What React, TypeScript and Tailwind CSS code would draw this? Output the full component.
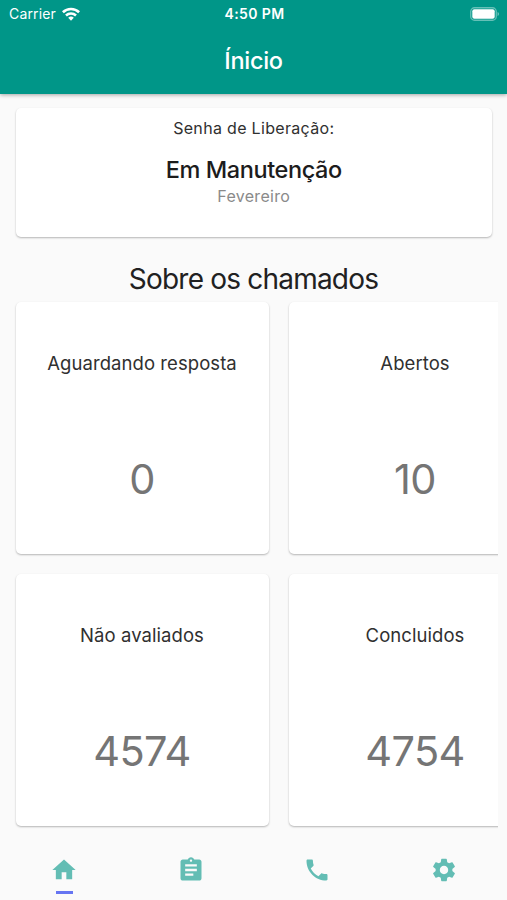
import { MdAssignment, MdHome, MdPhone, MdSettings } from "react-icons/md";

interface TicketCardProps {
  title: string;
  value: string;
}

const tickets: TicketCardProps[] = [
  { title: "Aguardando resposta", value: "0" },
  { title: "Abertos", value: "10" },
  { title: "Não avaliados", value: "4574" },
  { title: "Concluidos", value: "4754" },
];

const tabs = [
  { name: "home", Icon: MdHome },
  { name: "tickets", Icon: MdAssignment },
  { name: "phone", Icon: MdPhone },
  { name: "settings", Icon: MdSettings },
];

function TicketCard({ title, value }: TicketCardProps) {
  return (
    <div className="flex h-[252px] flex-col items-center rounded-[5px] bg-white pt-[47px] shadow-[0_1px_2px_rgba(0,0,0,0.28)]">
      <h3 className="text-[18.5px] leading-7 tracking-[0.07px] text-[#303030]">{title}</h3>
      <p className="mt-[77px] text-[41.5px] leading-[50px] tracking-[-0.6px] text-[#757575]">
        {value}
      </p>
    </div>
  );
}

function WifiIcon() {
  return (
    <svg viewBox="0 0 18 14" className="h-3.5 w-[18px]" fill="none" stroke="currentColor" strokeWidth="2.6">
      <path d="M.9 5.2a11.7 11.7 0 0 1 16.2 0" />
      <path d="M4 8.5a7.3 7.3 0 0 1 10 0" />
      <path d="M6.2 10.8a4 4 0 0 1 5.6 0L9 13.8z" fill="currentColor" stroke="none" />
    </svg>
  );
}

function BatteryIcon() {
  return (
    <svg viewBox="0 0 30 14" className="h-3.5 w-[30px]">
      <rect x=".75" y=".75" width="25.5" height="12.5" rx="3.8" fill="none" stroke="white" strokeOpacity=".4" strokeWidth="1.3" />
      <rect x="2.3" y="2.3" width="22.4" height="9.4" rx="2" fill="white" />
      <path d="M27.6 5a2.2 2.2 0 0 1 0 4z" fill="white" fillOpacity=".5" />
    </svg>
  );
}

function StatusBar() {
  return (
    <div className="grid h-7 grid-cols-3 items-center pr-[7px] pl-[9px] text-sm">
      <div className="flex items-center gap-[6px] tracking-[0.15px]">
        Carrier <WifiIcon />
      </div>
      <span className="text-center font-semibold tracking-[0.38px]">4:50 PM</span>
      <div className="justify-self-end">
        <BatteryIcon />
      </div>
    </div>
  );
}

export default function App() {
  return (
    <div className="flex h-[900px] w-[507px] flex-col overflow-hidden bg-[#fafafa] font-[Inter,sans-serif]">
      <header className="h-[94px] shrink-0 bg-[#009688] text-white shadow-[0_1px_4px_rgba(0,0,0,0.35)]">
        <StatusBar />
        <h1 className="mt-[17px] text-center text-[23.5px] leading-8 font-medium tracking-[-0.3px]">Ínicio</h1>
      </header>

      <main className="grow pt-[14px]">
        <section className="ml-[15.5px] h-[129px] w-[476.5px] rounded-[5px] bg-white pt-2 text-center shadow-[0_1px_2px_rgba(0,0,0,0.28)]">
          <p className="text-base tracking-[0.32px] text-[#303030]">Senha de Liberação:</p>
          <p className="mt-[14px] text-[23.5px] leading-8 font-medium tracking-[-0.42px] text-[#1c1c1c]">
            Em Manutenção
          </p>
          <p className="-mt-[2px] text-base tracking-[0.3px] text-[#8a8a8a]">Fevereiro</p>
        </section>

        <h2 className="mt-[21px] text-center text-[28px] leading-[42px] tracking-[-0.8px] text-[#212121]">
          Sobre os chamados
        </h2>

        {/* second column runs past the edge and is cut off */}
        <div className="h-[534px] w-[498px] overflow-hidden pt-[2px] pl-[15.5px]">
          <div className="grid w-[526px] grid-cols-2 gap-5">
            {tickets.map((ticket) => (
              <TicketCard key={ticket.title} {...ticket} />
            ))}
          </div>
        </div>
      </main>

      <nav className="grid h-[62px] shrink-0 grid-cols-4 pl-px text-[#63bdb4]">
        {tabs.map(({ name, Icon }, i) => (
          <div key={name} className="flex flex-col items-center pt-[17.5px]">
            <Icon className="size-7" />
            {i === 0 && <span className="mt-[7.5px] h-[3px] w-[17px] bg-[#6675f2]" />}
          </div>
        ))}
      </nav>
    </div>
  );
}
